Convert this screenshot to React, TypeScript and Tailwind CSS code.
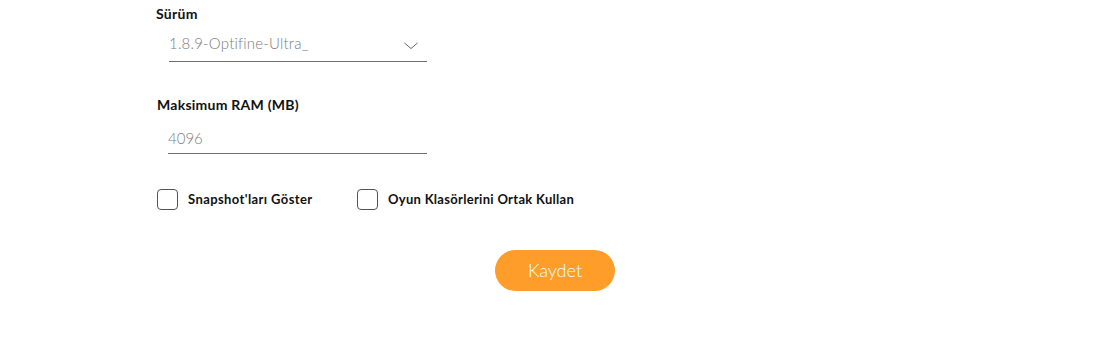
import React from "react";

export default function App() {
  return (
    <div className="w-[1101px] h-[346px] bg-white [font-variant-ligatures:none]" style={{ fontFamily: "Lato, 'Noto Sans', sans-serif" }}>
      <div className="pl-[156px] pt-[4px] w-[954px] flex flex-col">
        <label className="h-5 leading-5 text-[14px] font-bold text-[#111] tracking-[0.3px]">Sürüm</label>
        <div className="ml-[13px] w-[258px] pt-[7px] pb-[6px] border-b border-[#707070] flex items-center justify-between">
          <span className="leading-6 text-[15px] font-light text-[#7d7d7d] tracking-[0.2px]">1.8.9-Optifine-Ultra_</span>
          <svg width="16" height="10" viewBox="0 0 16 10" className="mr-[8px] mt-[6px]">
            <path d="M1.5 2 L8 7.5 L14.5 2" fill="none" stroke="#666" strokeWidth="1" />
          </svg>
        </div>

        <label className="mt-[33px] ml-[1px] h-5 leading-5 text-[14px] font-bold text-[#111] tracking-[0.25px]">Maksimum RAM (MB)</label>
        <div className="ml-[12px] w-[259px] pt-[13px] pb-[5px] border-b border-[#707070]">
          <span className="block leading-5 text-[15px] font-light text-[#7d7d7d]">4096</span>
        </div>

        <div className="mt-[35px] ml-[1px] flex items-center">
          <label className="w-[200px] flex items-center gap-[10px]">
            <span className="w-[21px] h-[21px] rounded-[4px] border border-[#555] bg-white" />
            <span className="text-[13px] font-bold text-[#111] tracking-[0.4px]">Snapshot'ları Göster</span>
          </label>
          <label className="flex items-center gap-[10px]">
            <span className="w-[21px] h-[21px] rounded-[4px] border border-[#555] bg-white" />
            <span className="text-[13px] font-bold text-[#111] tracking-[0.3px]">Oyun Klasörlerini Ortak Kullan</span>
          </label>
        </div>

        <div className="mt-[40px] flex justify-center w-[798px]">
          <button className="w-[120px] h-[41px] rounded-full bg-[#ff9d2a] text-white text-[18px] font-light">Kaydet</button>
        </div>
      </div>
    </div>
  );
}
